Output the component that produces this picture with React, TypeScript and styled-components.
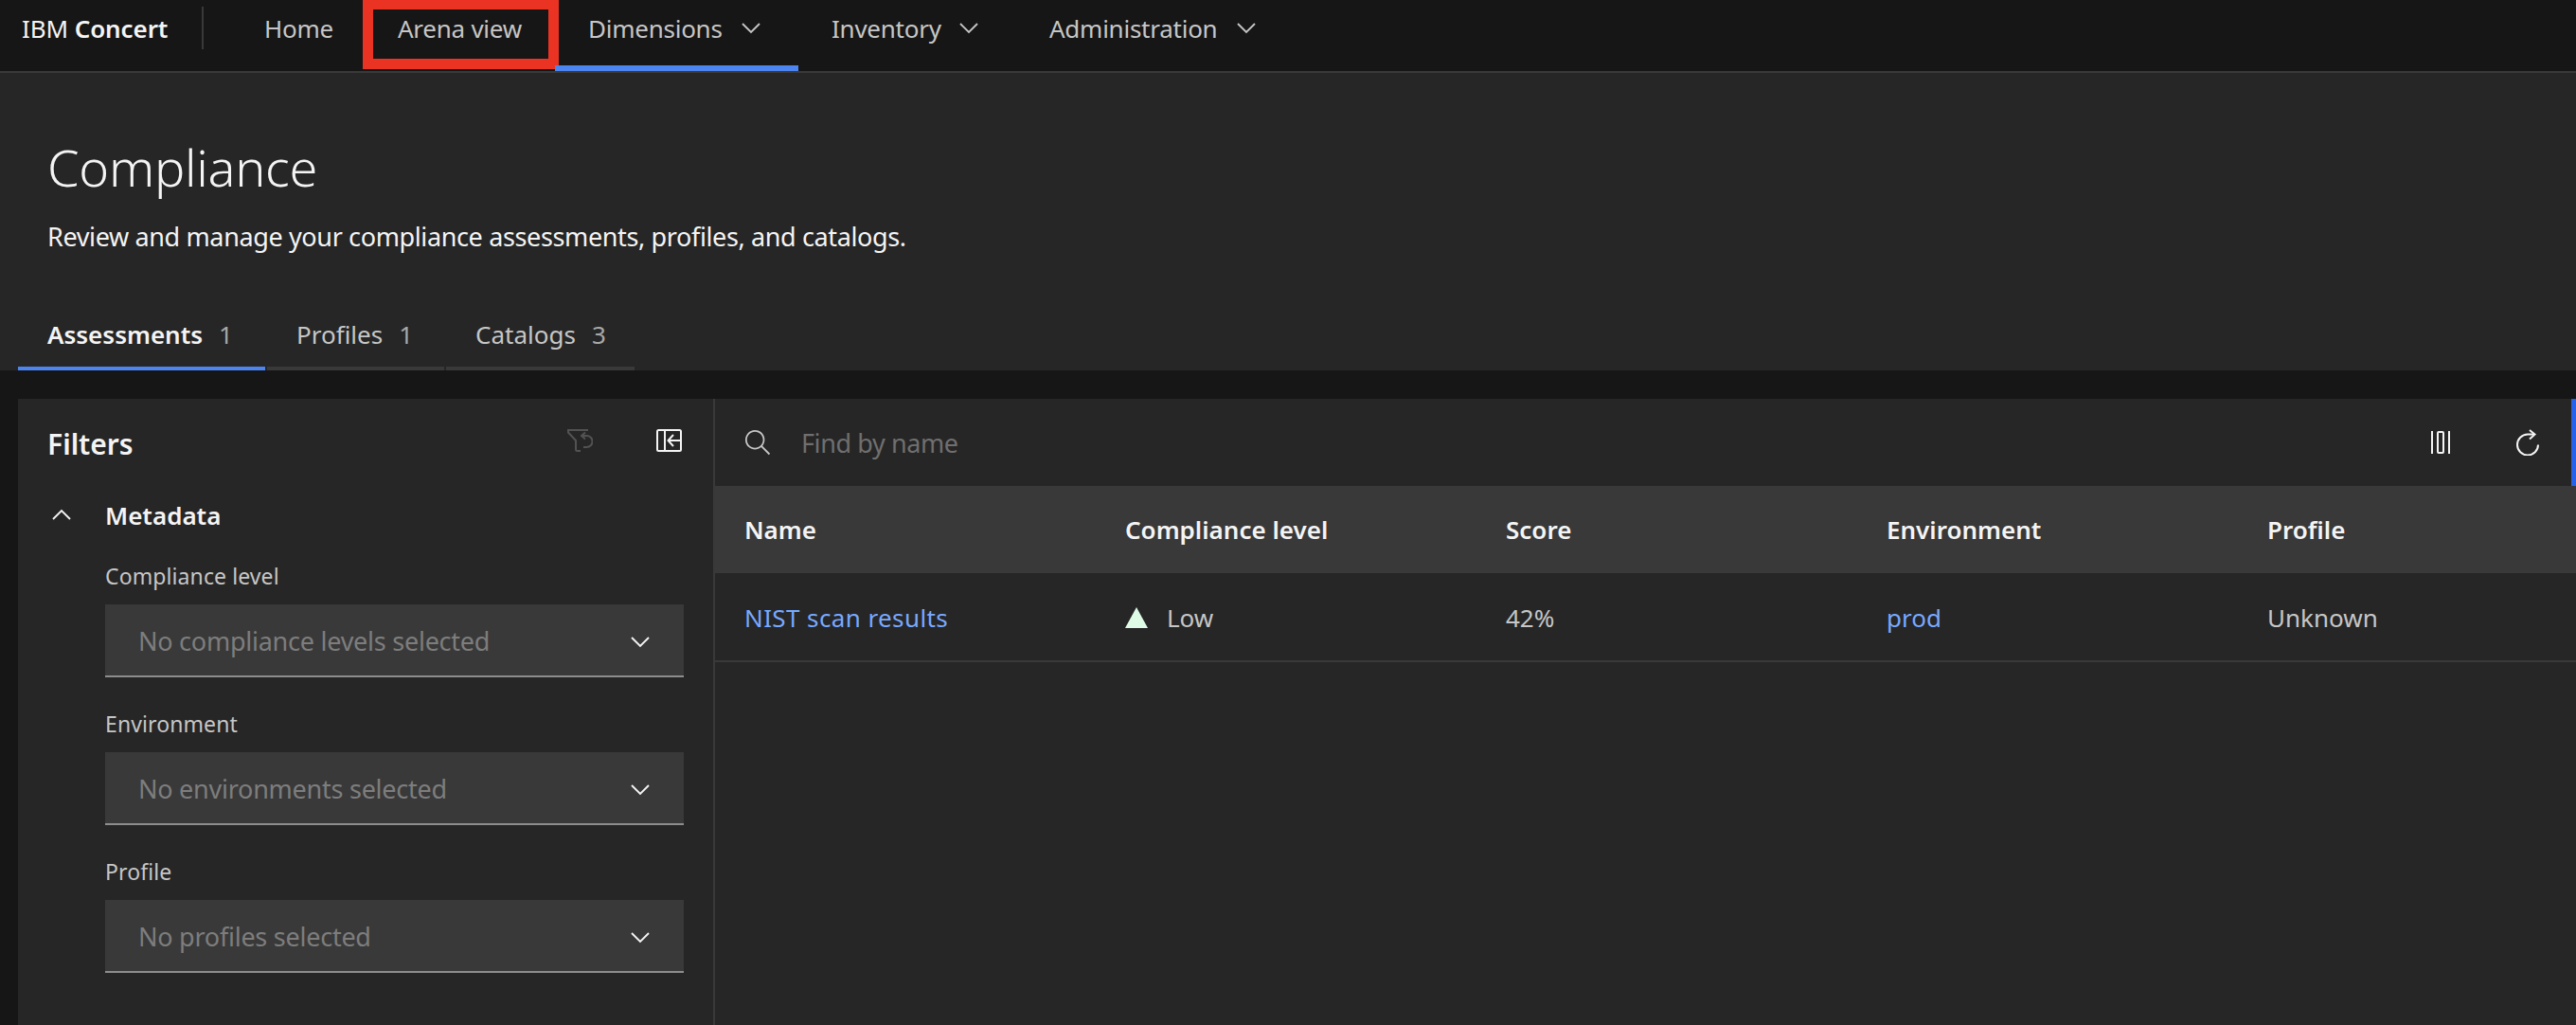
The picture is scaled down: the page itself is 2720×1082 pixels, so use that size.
import React from "react";
import styled, { createGlobalStyle } from "styled-components";

const Global = createGlobalStyle`
  html, body { margin: 0; padding: 0; background: #161616; }
  *, *::before, *::after { box-sizing: border-box; }
  body { font-family: "Noto Sans", Roboto, "Liberation Sans", sans-serif; color: #f4f4f4; }
`;

const Page = styled.div`
  width: 2720px; height: 1082px; overflow: hidden;
  display: flex; flex-direction: column; background: #161616;
`;
const Header = styled.header`
  height: 77px; flex: none; display: flex; align-items: flex-start;
  background: #161616; border-bottom: 2px solid #393939;
`;
const Brand = styled.div`
  width: 213px; padding-left: 23px; height: 60px; flex: none;
  display: flex; align-items: center; font-size: 26px; letter-spacing: -0.1px; color: #f4f4f4; white-space: pre;
  b { font-weight: 600; }
`;
const Divider = styled.div`
  width: 2px; height: 45px; margin: 7px 29px 0 0; background: #393939; flex: none;
`;
const NavItem = styled.div<{ $w: number; $selected?: boolean; $boxed?: boolean }>`
  position: relative; width: ${p => p.$w}px; height: 75px; padding: 0 40px 15px 35px;
  display: flex; align-items: center; flex: none;
  font-size: 26px; letter-spacing: -0.25px; color: #c6c6c6; white-space: nowrap;
  ${p => p.$selected && `&::after { content: ""; position: absolute; left: 0; right: 0; bottom: 0; height: 6px; background: #4c84f0; }`}
  ${p => p.$boxed && `&::after { content: ""; position: absolute; left: -2px; right: -4px; top: 0; height: 73px; border: 11px solid #ea3323; border-top-width: 10px; }`}
`;
const NavChevronIcon = styled.svg`
  margin-left: auto; flex: none;
`;
const Intro = styled.section`
  background: #262626; flex: none; height: 314px; padding-top: 63px; display: flex; flex-direction: column;
`;
const Title = styled.h1`
  margin: 0 0 0 50px; font-size: 54px; line-height: 72px; font-weight: 300; letter-spacing: -0.3px; color: #f4f4f4;
`;
const Subtitle = styled.p`
  margin: 20px 0 0 50px; font-size: 27px; line-height: 36px; letter-spacing: -0.37px; color: #f4f4f4;
`;
const TabStrip = styled.div`
  margin: auto 0 0 19px; display: flex; gap: 2px;
`;
const Tab = styled.div<{ $w: number; $active?: boolean }>`
  width: ${p => p.$w}px; height: 60px; padding: 0 0 13px 31px; display: flex; align-items: center;
  font-size: 26px; font-weight: ${p => (p.$active ? 600 : 400)};
  color: ${p => (p.$active ? "#f4f4f4" : "#c6c6c6")};
  border-bottom: 4px solid ${p => (p.$active ? "#4c84f0" : "#393939")};
`;
const Count = styled.span`
  margin-left: 17px; font-weight: 400; color: #a8a8a8;
`;
const Content = styled.div`
  flex: 1; min-height: 0; margin-top: 30px; padding-left: 19px; display: flex;
`;
const FilterPanel = styled.aside`
  width: 736px; flex: none; background: #262626; border-right: 2px solid #393939;
`;
const FilterHead = styled.div`
  height: 94px; padding: 0 33px 0 31px; display: flex; align-items: center; justify-content: space-between;
`;
const FilterTitle = styled.h2`
  margin: 0; font-size: 30px; font-weight: 600; color: #f4f4f4;
`;
const HeadIcons = styled.div`
  display: flex; gap: 67px; padding-bottom: 6px; svg { display: block; }
`;
const SectionHead = styled.div`
  height: 58px; padding-left: 36px; display: flex; align-items: center; gap: 36px;
  font-size: 26px; font-weight: 600; color: #f4f4f4;
`;
const Fields = styled.div`
  margin-top: 19px; padding: 0 31px 0 92px; display: flex; flex-direction: column; gap: 33px;
`;
const Label = styled.div`
  height: 32px; line-height: 32px; font-size: 23px; letter-spacing: 0.1px; color: #c6c6c6; margin-bottom: 14px;
`;
const Select = styled.div`
  height: 77px; padding: 2px 36px 0 35px; background: #393939; border-bottom: 2px solid #8d8d8d;
  display: flex; align-items: center; justify-content: space-between;
  font-size: 27px; letter-spacing: -0.25px; color: #7d7d7d;
`;
const Main = styled.main`
  flex: 1; min-width: 0; background: #262626; overflow: hidden;
`;
const Toolbar = styled.div`
  height: 92px; padding: 0 34px 0 30px; display: flex; align-items: center;
  border-right: 5px solid #2563eb;
`;
const SearchText = styled.span`
  margin-left: 31px; flex: 1; font-size: 27px; letter-spacing: -0.4px; color: #6f6f6f;
`;
const ToolIcons = styled.div`
  display: flex; align-items: center; gap: 70px; svg { display: block; }
`;
const TableRow = styled.div<{ $head?: boolean }>`
  width: 2010px; height: ${p => (p.$head ? 92 : 94)}px; padding-top: ${p => (p.$head ? 0 : 2)}px;
  display: grid; grid-template-columns: repeat(5, 402px); align-items: center;
  background: ${p => (p.$head ? "#393939" : "transparent")};
  border-bottom: ${p => (p.$head ? "none" : "2px solid #393939")};
  font-size: 26px; font-weight: ${p => (p.$head ? 600 : 400)};
  color: ${p => (p.$head ? "#f4f4f4" : "#c6c6c6")};
`;
const Cell = styled.div`
  padding-left: 31px; display: flex; align-items: center; white-space: nowrap;
`;
const LinkText = styled.span<{ $spacing?: number }>`
  color: #78a9ff; letter-spacing: ${p => p.$spacing ?? 0}px;
`;
const LowIcon = styled.svg`
  margin-right: 20px;
`;
const ChevronIcon = styled.svg<{ $up?: boolean }>`
  flex: none; transform: ${p => (p.$up ? "rotate(180deg)" : "none")};
`;

const Chevron = ({ up = false }: { up?: boolean }) => (
  <ChevronIcon $up={up} width="20" height="20" viewBox="0 0 20 20" fill="none" stroke="#f4f4f4" strokeWidth="1.9">
    <path d="M1 6 L10 15 L19 6" />
  </ChevronIcon>
);
const NavChevron = () => (
  <NavChevronIcon width="20" height="20" viewBox="0 0 20 20" fill="none" stroke="#c6c6c6" strokeWidth="1.9">
    <path d="M1 5 L10 14 L19 5" />
  </NavChevronIcon>
);
const FilterResetIcon = () => (
  <svg width="27" height="24" viewBox="0 0 27 24" fill="none" stroke="#525252" strokeWidth="2">
    <path d="M22 1H1V3.500L9 12V21.500Q9 23 11 23H14" />
    <path d="M19 3.500L15 7L19 10.500" />
    <path d="M15 7H20.500A6 6 0 0 1 20.500 19H17" />
  </svg>
);
const PanelIcon = () => (
  <svg width="27" height="24" viewBox="0 0 27 24" fill="none" stroke="#f4f4f4" strokeWidth="2">
    <rect x="1" y="1" width="25" height="22" rx="1.5" />
    <path d="M9 1V23" />
    <path d="M26 12H13M18 6L12.500 12L18 18" />
  </svg>
);
const SearchIcon = () => (
  <svg width="30" height="30" viewBox="0 0 16 16" fill="#c6c6c6">
    <path d="M15 14.300L10.700 10c1.900-2.300 1.600-5.800-.7-7.700S4.200.7 2.300 3 .7 8.800 3 10.700c2 1.700 5 1.700 7 0l4.300 4.300.7-.7zM2 6.500C2 4 4 2 6.500 2S11 4 11 6.500 9 11 6.500 11 2 9 2 6.500z" />
  </svg>
);
const ColumnsIcon = () => (
  <svg width="20" height="24" viewBox="0 0 20 24" fill="none" stroke="#f4f4f4" strokeWidth="2">
    <path d="M1 0V24M19 0V24" />
    <rect x="7" y="1" width="6" height="22" rx="1" />
  </svg>
);
const RefreshIcon = () => (
  <svg width="24" height="28" viewBox="0 0 24 28" fill="none" stroke="#f4f4f4" strokeWidth="2">
    <path d="M19 5.500H12A11 11 0 1 0 23 16.500" />
    <path d="M14 1L19.500 5.500L14 10.500" />
  </svg>
);

const fields = [
  ["Compliance level", "No compliance levels selected"],
  ["Environment", "No environments selected"],
  ["Profile", "No profiles selected"],
];

export default function App() {
  return (
    <Page>
      <Global />
      <Header>
        <Brand>IBM <b>Concert</b></Brand>
        <Divider />
        <NavItem $w={141}>Home</NavItem>
        <NavItem $w={201} $boxed>Arena view</NavItem>
        <NavItem $w={257} $selected>Dimensions<NavChevron /></NavItem>
        <NavItem $w={230}>Inventory<NavChevron /></NavItem>
        <NavItem $w={293}>Administration<NavChevron /></NavItem>
      </Header>
      <Intro>
        <Title>Compliance</Title>
        <Subtitle>Review and manage your compliance assessments, profiles, and catalogs.</Subtitle>
        <TabStrip>
          <Tab $w={261} $active>Assessments<Count>1</Count></Tab>
          <Tab $w={187}>Profiles<Count>1</Count></Tab>
          <Tab $w={199}>Catalogs<Count>3</Count></Tab>
        </TabStrip>
      </Intro>
      <Content>
        <FilterPanel>
          <FilterHead>
            <FilterTitle>Filters</FilterTitle>
            <HeadIcons><FilterResetIcon /><PanelIcon /></HeadIcons>
          </FilterHead>
          <SectionHead><Chevron up />Metadata</SectionHead>
          <Fields>
            {fields.map(([label, text]) => (
              <div key={label}>
                <Label>{label}</Label>
                <Select>{text}<Chevron /></Select>
              </div>
            ))}
          </Fields>
        </FilterPanel>
        <Main>
          <Toolbar>
            <SearchIcon />
            <SearchText>Find by name</SearchText>
            <ToolIcons><ColumnsIcon /><RefreshIcon /></ToolIcons>
          </Toolbar>
          <TableRow $head>
            <Cell>Name</Cell>
            <Cell>Compliance level</Cell>
            <Cell>Score</Cell>
            <Cell>Environment</Cell>
            <Cell>Profile</Cell>
          </TableRow>
          <TableRow>
            <Cell><LinkText $spacing={0.4}>NIST scan results</LinkText></Cell>
            <Cell>
              <LowIcon width="24" height="22" viewBox="0 0 24 22"><path d="M12 0L24 22H0Z" fill="#defbe6" /></LowIcon>
              Low
            </Cell>
            <Cell>42%</Cell>
            <Cell><LinkText>prod</LinkText></Cell>
            <Cell>Unknown</Cell>
          </TableRow>
        </Main>
      </Content>
    </Page>
  );
}
